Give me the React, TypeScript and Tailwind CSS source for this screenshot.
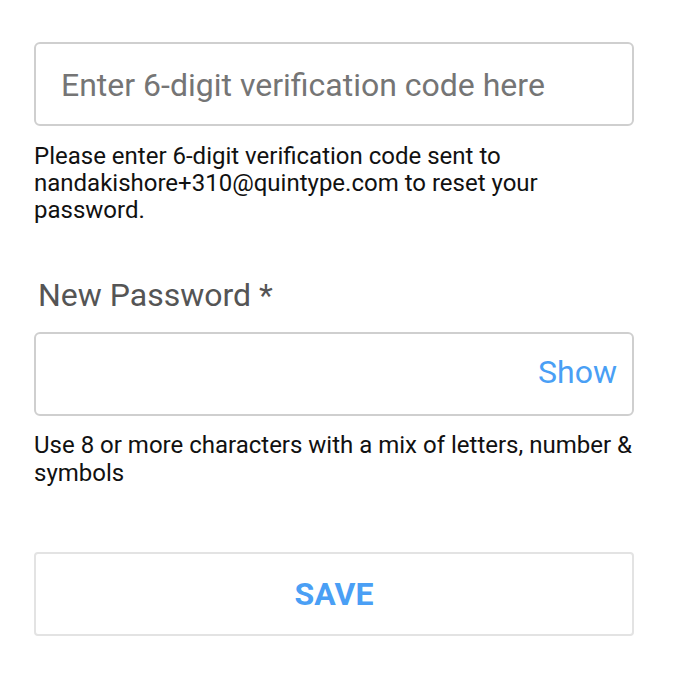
export default function App() {
  return (
    <div className="min-h-[676px] w-[680px] bg-white font-['Roboto',sans-serif]">
      <div className="ml-[34px] w-[600px] pt-[42px]">
        {/* Verification code */}
        <input
          type="text"
          placeholder="Enter 6-digit verification code here"
          className="block h-[84px] w-full rounded-[6px] border-2 border-[#cfcfcf] px-[25px] pt-[2px] text-[32px] text-[#333] outline-none placeholder:text-[#757575]"
        />
        <p className="mt-[17px] text-[24px] leading-[27px] text-[#111]">
          Please enter 6-digit verification code sent to nandakishore+310@quintype.com to reset your password.
        </p>

        {/* New password */}
        <label className="mt-[52px] block pl-[4px] text-[32px] leading-[38px] text-[#555]">
          New Password *
        </label>
        <div className="mt-[18px] flex h-[84px] w-full items-center rounded-[6px] border-2 border-[#cfcfcf] pr-[15px]">
          <input type="password" className="h-full min-w-0 flex-1 bg-transparent px-[25px] text-[32px] outline-none" />
          <button className="pb-[5px] text-[32px] text-[#4a9ff5]">Show</button>
        </div>
        <p className="mt-[15px] text-[24px] leading-[28px] text-[#111]">
          Use 8 or more characters with a mix of letters, number &amp; symbols
        </p>

        <button className="mt-[65px] flex h-[84px] w-full items-center justify-center rounded-[4px] border-2 border-[#e3e3e3] text-[32px] font-bold text-[#4a9ff5]">
          SAVE
        </button>
      </div>
    </div>
  )
}
